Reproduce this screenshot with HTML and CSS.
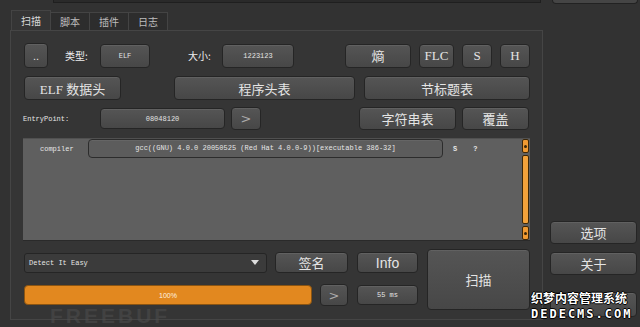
FILE: index.html
```html
<!DOCTYPE html>
<html lang="zh-CN">
    <head>
        <meta charset="UTF-8" />
        <title>Detect It Easy</title>
        <link rel="stylesheet" href="styles.css">
    </head>

    <body>
        <div class="top">
            <div class="top-field"></div>
            <div class="top-btn"></div>
        </div>
        <div class="main">
            <div class="tabs">
                <div class="tabbar">
                    <span class="tab active">扫描</span>
                    <span class="tab">脚本</span>
                    <span class="tab">插件</span>
                    <span class="tab">日志</span>
                </div>
                <div class="panel">
                    <div class="row row1">
                        <div class="btn b-dots">..</div>
                        <span class="lbl l-type">类型:</span>
                        <div class="btn small b-elf">ELF</div>
                        <span class="lbl l-size">大小:</span>
                        <div class="btn small b-size">1223123</div>
                        <div class="btn b-ent">熵</div>
                        <div class="btn serif b-flc">FLC</div>
                        <div class="btn serif b-s">S</div>
                        <div class="btn serif b-h">H</div>
                    </div>
                    <div class="row row2">
                        <div class="btn serif b-hdr">ELF 数据头</div>
                        <div class="btn b-prog">程序头表</div>
                        <div class="btn b-sect">节标题表</div>
                    </div>
                    <div class="row row3">
                        <span class="mono l-entry">EntryPoint:</span>
                        <div class="btn small b-entry">08048120</div>
                        <div class="btn arrow b-go">&gt;</div>
                        <div class="btn b-str">字符串表</div>
                        <div class="btn b-ovl">覆盖</div>
                    </div>
                    <div class="result">
                        <div class="result-body">
                            <div class="res-row">
                                <span class="mono res-name">compiler</span>
                                <div class="res-value mono">gcc((GNU) 4.0.0 20050525 (Red Hat 4.0.0-9))[executable 386-32]</div>
                                <span class="mono res-s">S</span>
                                <span class="mono res-q">?</span>
                            </div>
                        </div>
                        <div class="scrollbar">
                            <div class="sb-end"><i></i></div>
                            <div class="sb-handle"></div>
                            <div class="sb-end"><i></i></div>
                        </div>
                    </div>
                    <div class="bottom">
                        <div class="bottom-rows">
                            <div class="row rowA">
                                <div class="combo">
                                    <span class="mono">Detect It Easy</span>
                                    <span class="caret"></span>
                                </div>
                                <div class="btn b-sig">签名</div>
                                <div class="btn sans b-info">Info</div>
                            </div>
                            <div class="row rowB">
                                <div class="progress"><span>100%</span></div>
                                <div class="btn arrow b-next">&gt;</div>
                                <div class="btn small b-time">55 ms</div>
                            </div>
                        </div>
                        <div class="btn b-scan">扫描</div>
                    </div>
                </div>
            </div>
            <div class="side">
                <div class="btn side-btn">选项</div>
                <div class="btn side-btn">关于</div>
                <div class="btn side-btn side-last"></div>
            </div>
        </div>

        <div class="mark-free">FREEBUF</div>
        <div class="mark-dede">
            <div class="mark-cn">织梦内容管理系统</div>
            <div class="mark-en">DEDECMS.COM</div>
        </div>
    </body>
</html>
```

FILE: styles.css
```css
body {
    margin: 0;
    width: 640px;
    height: 327px;
    overflow: hidden;
    position: relative;
    background: #323232;
    color: #e2e2e2;
    font-family: "Noto Sans CJK SC", sans-serif;
}

.top {
    display: flex;
    height: 4px;
}

.top-field {
    margin-left: 53px;
    width: 486px;
    height: 2px;
    background: #2a2a2a;
    border: 1px solid #1f1f1f;
    border-top: none;
}

.top-btn {
    margin-left: 11px;
    width: 84px;
    height: 3px;
    background: #454545;
    border: 1px solid #222;
    border-top: none;
    border-radius: 0 0 4px 4px;
}

.main {
    display: flex;
    margin-top: 6px;
}

.tabs {
    margin-left: 10px;
    width: 533px;
}

.tabbar {
    display: flex;
    align-items: flex-end;
    height: 20px;
    padding-left: 1px;
}

.tab {
    width: 38px;
    height: 17px;
    line-height: 17px;
    text-align: center;
    font-size: 10px;
    color: #bdbdbd;
    background: #2d2d2d;
    border: 1px solid #444;
    border-bottom: none;
    border-left: none;
}

.tab.active {
    height: 19px;
    line-height: 19px;
    background: #353535;
    border-left: 1px solid #444;
    color: #d8d8d8;
}

.panel {
    box-sizing: border-box;
    height: 290px;
    border: 1px solid #454545;
    background: #353535;
    padding: 12px 0 0 13px;
}

.row {
    display: flex;
    align-items: center;
}

.btn {
    box-sizing: border-box;
    display: flex;
    align-items: center;
    justify-content: center;
    height: 24px;
    background: linear-gradient(#555, #474747);
    border: 1px solid #252525;
    border-radius: 4px;
    box-shadow: inset 0 1px 0 rgba(255, 255, 255, 0.07);
    font-size: 13px;
    color: #e4e4e4;
    white-space: nowrap;
}

.btn.small {
    font-family: "Liberation Mono", "DejaVu Sans Mono", monospace;
    font-size: 7px;
}

.btn.serif {
    font-family: "Liberation Serif", "Noto Sans CJK SC", serif;
    font-size: 13px;
}

.btn.sans {
    font-family: "Liberation Sans", sans-serif;
    font-size: 14px;
}

.btn.arrow {
    font-family: "DejaVu Sans", sans-serif;
    font-size: 13px;
    color: #aaa;
}

.mono {
    font-family: "Liberation Mono", "DejaVu Sans Mono", monospace;
    font-size: 7px;
    color: #e6e6e6;
}

.lbl {
    font-size: 10px;
    color: #ededed;
}

.row1 { height: 25px; }
.b-dots { width: 24px; height: 25px; font-family: "Liberation Sans", sans-serif; font-size: 11px; }
.l-type { margin-left: 17px; width: 35px; }
.b-elf { width: 50px; }
.l-size { margin-left: 38px; width: 34px; }
.b-size { width: 72px; }
.b-ent { margin-left: 51px; width: 66px; }
.b-flc { margin-left: 8px; width: 35px; font-size: 12px; }
.b-s { margin-left: 8px; width: 30px; font-size: 12px; }
.b-h { margin-left: 8px; width: 30px; font-size: 12px; }

.row2 { margin-top: 8px; }
.b-hdr { width: 97px; }
.b-prog { margin-left: 53px; width: 181px; }
.b-sect { margin-left: 9px; width: 166px; }

.row3 { margin-top: 7px; height: 23px; }
.l-entry { width: 77px; margin-left: -1px; }
.b-entry { width: 125px; height: 21px; font-size: 7.5px; }
.b-go { margin-left: 6px; width: 30px; height: 23px; }
.b-str { margin-left: 98px; width: 97px; height: 23px; }
.b-ovl { margin-left: 6px; width: 67px; height: 23px; }

.result {
    display: flex;
    margin-top: 8px;
    margin-left: -1px;
    width: 507px;
    height: 103px;
    box-sizing: border-box;
    background: #5f5f5f;
    border-top: 1px solid #505050;
    border-bottom: 1px solid #2a2a2a;
}

.result-body {
    flex: 1;
}

.res-row {
    display: flex;
    align-items: center;
    height: 19px;
}

.res-name {
    margin-left: 17px;
    width: 48px;
}

.res-value {
    box-sizing: border-box;
    width: 355px;
    height: 19px;
    line-height: 17px;
    text-align: center;
    border: 1px solid #2c2c2c;
    border-radius: 4px;
    background: #5c5c5c;
    box-shadow: inset 0 1px 0 rgba(255, 255, 255, 0.06);
}

.res-s { margin-left: 10px; font-weight: bold; }
.res-q { margin-left: 16px; font-weight: bold; }

.scrollbar {
    display: flex;
    flex-direction: column;
    gap: 2px;
    width: 7px;
    margin-right: 1px;
    height: 100%;
}

.sb-end {
    height: 14px;
    box-sizing: border-box;
    background: #f09a32;
    border: 1px solid #3a2608;
    border-radius: 2px;
    display: flex;
    align-items: center;
    justify-content: center;
}

.sb-end i {
    width: 3px;
    height: 3px;
    border-radius: 50%;
    background: #3a2608;
}

.sb-handle {
    flex: 1;
    box-sizing: border-box;
    background: #f3a23a;
    border: 1px solid #3a2608;
    border-radius: 2px;
}

.bottom {
    display: flex;
    margin-top: 8px;
}

.rowA { margin-top: 3px; }
.rowB { margin-top: 11px; }

.combo {
    box-sizing: border-box;
    display: flex;
    align-items: center;
    justify-content: space-between;
    width: 243px;
    height: 20px;
    padding: 0 7px 0 4px;
    background: #3b3b3b;
    border: 1px solid #252525;
    border-radius: 3px;
}

.caret {
    width: 0;
    height: 0;
    border-left: 4px solid transparent;
    border-right: 4px solid transparent;
    border-top: 5px solid #ddd;
}

.b-sig { margin-left: 8px; width: 73px; height: 21px; }
.b-info { margin-left: 9px; width: 61px; height: 21px; }

.progress {
    box-sizing: border-box;
    display: flex;
    align-items: center;
    justify-content: center;
    width: 288px;
    height: 20px;
    background: #e2881f;
    border: 1px solid #8a5412;
    border-radius: 4px;
    font-family: "Liberation Sans", sans-serif;
    font-size: 7px;
    color: #fff3e0;
}

.b-next { margin-left: 8px; width: 28px; height: 22px; }
.b-time { margin-left: 9px; width: 61px; height: 20px; }

.b-scan {
    margin-left: 9px;
    width: 103px;
    height: 61px;
    font-size: 13px;
}

.side {
    margin-left: 7px;
    width: 87px;
    padding-top: 211px;
}

.side-btn {
    height: 23px;
    margin-bottom: 8px;
    font-size: 13px;
}

.side-last {
    margin-top: 17px;
    height: 25px;
}

.mark-free {
    position: absolute;
    left: 50px;
    top: 305px;
    font-family: "Liberation Sans", sans-serif;
    font-weight: bold;
    font-size: 21px;
    letter-spacing: 3px;
    line-height: 21px;
    color: rgba(80, 80, 80, 0.5);
}

.mark-dede {
    position: absolute;
    left: 531px;
    top: 290px;
    width: 104px;
    color: #fff;
    font-weight: bold;
    text-shadow: 1px 0 0 #000, -1px 0 0 #000, 0 1px 0 #000, 0 -1px 0 #000;
}

.mark-cn {
    font-size: 12px;
    line-height: 16px;
    white-space: nowrap;
}

.mark-en {
    margin-top: 1px;
    font-family: "DejaVu Sans Mono", monospace;
    font-size: 12px;
    line-height: 14px;
    letter-spacing: 2px;
}
```
